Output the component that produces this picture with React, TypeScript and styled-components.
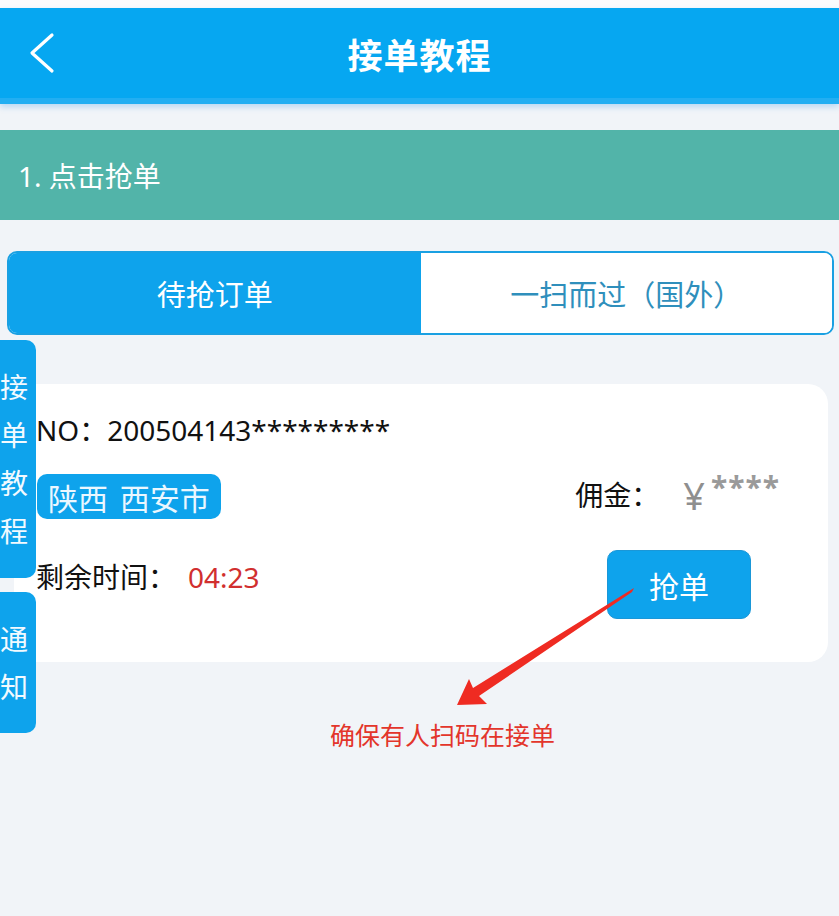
import React from 'react';
import styled, { createGlobalStyle } from 'styled-components';

const GlobalStyle = createGlobalStyle`
  html, body {
    margin: 0;
    padding: 0;
    background: #f1f4f8;
  }
  body {
    font-family: "Noto Sans", "Noto Sans CJK SC", sans-serif;
  }
`;

const Page = styled.div`
  position: relative;
  width: 839px;
  min-height: 916px;
  background: #f1f4f8;
  overflow: hidden;
`;

const TopStrip = styled.div`
  height: 8px;
  background: #fafbfd;
`;

const Header = styled.header`
  position: relative;
  display: flex;
  align-items: center;
  justify-content: center;
  height: 90px;
  background: #06a7f1;
  border-bottom: 6px solid #22aef2;
  box-shadow: 0 3px 6px rgba(20, 130, 230, 0.25);
`;

const BackButton = styled.button`
  position: absolute;
  left: 24px;
  top: 50%;
  transform: translateY(-50%);
  display: flex;
  padding: 0;
  border: none;
  background: transparent;
`;

const Title = styled.h1`
  margin: 0;
  color: #fff;
  font-size: 35px;
  font-weight: 700;
  letter-spacing: 1px;
`;

const StepBar = styled.div`
  display: flex;
  align-items: center;
  height: 90px;
  margin-top: 26px;
  padding-left: 18px;
  background: #52b4a9;
  color: #fff;
  font-size: 28px;
`;

const Tabs = styled.div`
  display: flex;
  height: 80px;
  margin: 31px 5px 0 7px;
  border: 2px solid #1aa0e2;
  border-radius: 10px;
  overflow: hidden;
  background: #fff;
`;

const Tab = styled.div<{ $active?: boolean }>`
  flex: 1;
  display: flex;
  align-items: center;
  justify-content: center;
  font-size: 29px;
  background: ${(p) => (p.$active ? '#0ea3ec' : '#fff')};
  color: ${(p) => (p.$active ? '#fff' : '#2f8fbc')};
`;

const Card = styled.div`
  display: flex;
  flex-direction: column;
  margin: 49px 11px 0 14px;
  padding: 26px 48px 43px 22px;
  background: #fff;
  border-radius: 20px;
  color: #111;
  font-size: 28px;
`;

const OrderNo = styled.div`
  line-height: 40px;
`;

const Row = styled.div<{ $align?: string }>`
  display: flex;
  align-items: ${(p) => p.$align || 'center'};
  justify-content: space-between;
`;

const Tag = styled.span`
  display: inline-flex;
  align-items: center;
  height: 45px;
  margin-top: 24px;
  margin-left: 1px;
  padding: 0 11px;
  border-radius: 10px;
  background: #0ea3ec;
  color: #eaf7ff;
  font-size: 30px;
  word-spacing: 4px;
`;

const Price = styled.div`
  display: flex;
  align-items: flex-start;
  margin-top: 20px;
  line-height: 40px;
`;

const Yen = styled.span`
  margin-left: 24px;
  color: #8f8f8f;
  font-size: 38px;
  line-height: 40px;
`;

const Masked = styled.span`
  margin-left: 6px;
  margin-top: -8px;
  color: #9a9a9a;
  font-size: 30px;
  font-weight: 700;
  letter-spacing: 1px;
`;

const TimeLabel = styled.div`
  margin-top: 38px;
  line-height: 40px;
`;

const Countdown = styled.span`
  margin-left: 12px;
  color: #d12f2f;
`;

const GrabButton = styled.button`
  width: 144px;
  height: 69px;
  margin-top: 31px;
  margin-right: 29px;
  border: 1px solid #1a97d8;
  border-radius: 10px;
  background: #0ea3ec;
  color: #fff;
  font-family: inherit;
  font-size: 30px;
`;

const Tip = styled.div`
  margin-top: 54px;
  text-align: center;
  padding-left: 46px;
  color: #e3352b;
  font-size: 25px;
`;

const SideDock = styled.div`
  position: absolute;
  left: 0;
  top: 340px;
  display: flex;
  flex-direction: column;
  gap: 14px;
`;

const SideTab = styled.div<{ $h: number }>`
  display: flex;
  flex-direction: column;
  justify-content: center;
  width: 36px;
  height: ${(p) => p.$h}px;
  background: #0ea3ec;
  border-radius: 0 10px 10px 0;
  color: #f2faff;
  font-size: 28px;
`;

const SideChar = styled.span`
  display: block;
  line-height: 48px;
`;

const Annotation = styled.svg`
  position: absolute;
  left: 0;
  top: 0;
  pointer-events: none;
`;

const VerticalTab = ({ text, height }: { text: string; height: number }) => (
  <SideTab $h={height}>
    {text.split('').map((c, i) => (
      <SideChar key={i}>{c}</SideChar>
    ))}
  </SideTab>
);

const App = () => {
  return (
    <Page>
      <GlobalStyle />
      <TopStrip />
      <Header>
        <BackButton aria-label="back">
          <svg width="34" height="44" viewBox="0 0 34 44">
            <path d="M28 4 L8 22 L28 40" fill="none" stroke="#fff" strokeWidth="3.2" strokeLinecap="round" strokeLinejoin="round" />
          </svg>
        </BackButton>
        <Title>接单教程</Title>
      </Header>

      <StepBar>1. 点击抢单</StepBar>

      <Tabs>
        <Tab $active>待抢订单</Tab>
        <Tab>一扫而过（国外）</Tab>
      </Tabs>

      <Card>
        <OrderNo>NO：200504143*********</OrderNo>
        <Row>
          <Tag>陕西 西安市</Tag>
          <Price>
            佣金：<Yen>¥</Yen>
            <Masked>****</Masked>
          </Price>
        </Row>
        <Row $align="flex-start">
          <TimeLabel>
            剩余时间：<Countdown>04:23</Countdown>
          </TimeLabel>
          <GrabButton>抢单</GrabButton>
        </Row>
      </Card>

      <Tip>确保有人扫码在接单</Tip>

      <SideDock>
        <VerticalTab text="接单教程" height={238} />
        <VerticalTab text="通知" height={141} />
      </SideDock>

      <Annotation width="839" height="916" viewBox="0 0 839 916">
        <polygon
          points="634,588 632,592 479,696 487,704 457,705 469,679 473,688"
          fill="#ef2b22"
        />
      </Annotation>
    </Page>
  );
};

export default App;
